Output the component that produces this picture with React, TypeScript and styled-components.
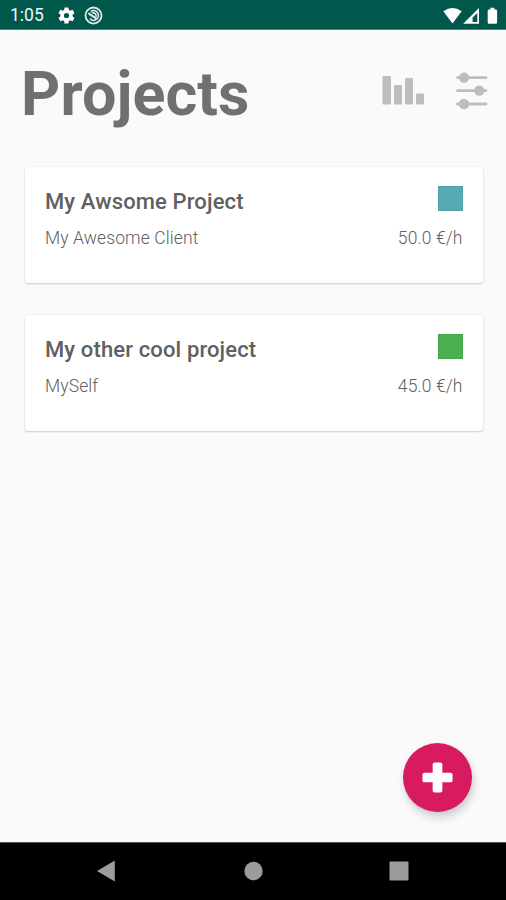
import React from "react";
import styled, { createGlobalStyle } from "styled-components";

const GlobalStyle = createGlobalStyle`
  * { box-sizing: border-box; }
  body { margin: 0; background: #fafafa; font-family: Roboto, "Liberation Sans", sans-serif; }
`;

const Screen = styled.div`
  width: 506px;
  height: 900px;
  display: flex;
  flex-direction: column;
  background: #fafafa;
  overflow: hidden;
`;

const StatusBar = styled.header`
  height: 30px;
  flex: none;
  display: flex;
  align-items: flex-start;
  justify-content: space-between;
  padding: 0 7px 0 10px;
  background: #00574b;
  border-bottom: 1px solid #4c8980;
  color: #fff;
`;

const StatusGroup = styled.div`
  display: flex;
  align-items: center;
  height: 31px;
`;

const Clock = styled.span`
  width: 48px;
  font-size: 17.5px;
  line-height: 31px;
  font-weight: 400;
  color: #f0f7f6;
`;

const StatusIcon = styled.svg`
  flex: none;
  margin-right: 9px;
`;

const Content = styled.main`
  flex: 1;
  display: flex;
  flex-direction: column;
  padding: 28px 23px 0 24px;
`;

const TitleRow = styled.div`
  display: flex;
  justify-content: space-between;
  height: 109px;
  margin-right: -6px;
`;

const Title = styled.h1`
  margin: 1px 0 0 -4px;
  font-size: 61px;
  line-height: 71px;
  font-weight: 700;
  letter-spacing: 0.1px;
  padding-left: 1px;
  color: #707070;
`;

const Actions = styled.div`
  display: flex;
  gap: 32px;
  padding-top: 13px;
  color: #bdbdbd;
`;

const IconButton = styled.button`
  padding: 0;
  border: 0;
  background: none;
  color: inherit;
  height: 40px;
  display: flex;
`;

const CardList = styled.div`
  display: flex;
  flex-direction: column;
  gap: 32px;
  padding-left: 1px;
`;

const Card = styled.article`
  height: 116px;
  padding: 19px 20.5px 0 20px;
  background: #fff;
  border-radius: 3px;
  box-shadow: 0 1px 2px rgba(0, 0, 0, 0.18), 0 0 2px rgba(0, 0, 0, 0.07);
`;

const CardRow = styled.div`
  display: flex;
  justify-content: space-between;
  align-items: flex-start;
`;

const ProjectName = styled.h2`
  margin: 0;
  font-size: 22px;
  line-height: 32px;
  font-weight: 500;
  letter-spacing: 0.13px;
  color: #606060;
`;

const Swatch = styled.span<{ $color: string }>`
  width: 25px;
  height: 25px;
  background: ${(p) => p.$color};
  box-shadow: inset 0 0 0 1px rgba(0, 0, 0, 0.06);
`;

const Detail = styled.span`
  font-size: 17.5px;
  line-height: 40px;
  font-weight: 300;
  letter-spacing: 0.1px;
  color: #606060;
`;

const AddButton = styled.button`
  width: 69px;
  height: 69px;
  margin: auto 11px 30px auto;
  padding: 0;
  border: 0;
  border-radius: 50%;
  display: flex;
  align-items: center;
  justify-content: center;
  background: #d81b60;
  box-shadow: 2px 6px 9px rgba(0, 0, 0, 0.16), 0 1px 5px rgba(0, 0, 0, 0.06);
`;

const NavBar = styled.nav`
  height: 58px;
  flex: none;
  display: flex;
  justify-content: space-between;
  align-items: center;
  padding: 0 97px 2px 96px;
  background: #000;
  border-top: 1px solid #555;
`;

const projects = [
  { name: "My Awsome Project", client: "My Awesome Client", rate: "50.0 €/h", color: "#55abb4" },
  { name: "My other cool project", client: "MySelf", rate: "45.0 €/h", color: "#4caf50" },
];

export default function App() {
  return (
    <>
      <GlobalStyle />
      <Screen>
        <StatusBar>
          <StatusGroup>
            <Clock>1:05</Clock>
            <StatusIcon width="17" height="17" viewBox="1.5 1.5 21 21" fill="#fff">
              <path d="M19.43 12.98c.04-.32.07-.64.07-.98s-.03-.66-.07-.98l2.11-1.65c.19-.15.24-.42.12-.64l-2-3.46c-.12-.22-.39-.3-.61-.22l-2.49 1c-.52-.4-1.08-.73-1.69-.98l-.38-2.65A.49.49 0 0 0 14 2h-4c-.25 0-.46.18-.49.42l-.38 2.65c-.61.25-1.17.59-1.69.98l-2.49-1c-.23-.09-.49 0-.61.22l-2 3.46c-.13.22-.07.49.12.64l2.11 1.65c-.04.32-.07.65-.07.98s.03.66.07.98l-2.11 1.65c-.19.15-.24.42-.12.64l2 3.46c.12.22.39.3.61.22l2.49-1c.52.4 1.08.73 1.69.98l.38 2.65c.03.24.24.42.49.42h4c.25 0 .46-.18.49-.42l.38-2.65c.61-.25 1.17-.59 1.69-.98l2.49 1c.23.09.49 0 .61-.22l2-3.46c.12-.22.07-.49-.12-.64l-2.11-1.65zM12 15.2a3.2 3.2 0 1 1 0-6.4 3.2 3.2 0 0 1 0 6.4z" />
            </StatusIcon>
            <StatusIcon width="19" height="19" viewBox="0 0 18 18" fill="none" stroke="#dcebe8">
              <circle cx="9" cy="9" r="7.6" strokeWidth="1.7" />
              <path d="M6.4 5.2A4.6 4.6 0 1 1 5.6 12" strokeWidth="1.6" />
              <path d="M4.6 6.4C5.2 9.4 8.4 8.2 11.8 12.2" strokeWidth="2" />
              <path d="M7.4 6.6c2.6-.6 4.4 1 4.2 3.6" strokeWidth="1.5" />
            </StatusIcon>
          </StatusGroup>
          <StatusGroup>
            <svg width="56" height="20" viewBox="443 5 56 20" fill="#fff">
              <path d="M443.3 10.3Q452.5 3.6 461.7 10.3L452.5 22.5Z" />
              <path fillRule="evenodd" d="M479 7V22.7H463.2ZM477.3 12L472.6 16.6V21H477.3Z" />
              <path d="M489 8.4h1.4V6.8h4v1.6h1.4q1.3 0 1.3 1.3v11.7q0 1.3-1.3 1.3h-6.8q-1.3 0-1.3-1.3V9.7q0-1.3 1.3-1.3Z" />
            </svg>
          </StatusGroup>
        </StatusBar>
        <Content>
          <TitleRow>
            <Title>Projects</Title>
            <Actions>
              <IconButton aria-label="Statistics">
                <svg width="42" height="40" viewBox="382 71 42 40" fill="currentColor">
                  <rect x="382.5" y="76" width="8.5" height="28.5" rx="1" />
                  <rect x="394" y="85" width="8" height="19.5" rx="1" />
                  <rect x="405" y="78" width="8" height="26.5" rx="1" />
                  <rect x="416" y="93.5" width="8" height="11" rx="1" />
                </svg>
              </IconButton>
              <IconButton aria-label="Settings">
                <svg width="33" height="40" viewBox="456 71 33 40" fill="currentColor" stroke="currentColor" strokeWidth="2.8" strokeLinecap="round">
                  <path d="M457.5 77.6H486M457.5 90.6H486M457.5 104H486" />
                  <g stroke="none">
                    <circle cx="464" cy="77.6" r="5.2" />
                    <circle cx="479.3" cy="90.6" r="5.2" />
                    <circle cx="464" cy="104" r="5.2" />
                  </g>
                </svg>
              </IconButton>
            </Actions>
          </TitleRow>
          <CardList>
            {projects.map((project) => (
              <Card key={project.name}>
                <CardRow>
                  <ProjectName>{project.name}</ProjectName>
                  <Swatch $color={project.color} />
                </CardRow>
                <CardRow>
                  <Detail>{project.client}</Detail>
                  <Detail>{project.rate}</Detail>
                </CardRow>
              </Card>
            ))}
          </CardList>
          <AddButton aria-label="Add project">
            <svg width="31" height="31" viewBox="0 0 32 32" fill="#fff">
              <rect x="11" y="0.5" width="10" height="31" rx="2" />
              <rect x="0.5" y="11" width="31" height="10" rx="2" />
            </svg>
          </AddButton>
        </Content>
        <NavBar>
          <svg width="20" height="22" viewBox="0 0 20 22" fill="#9c9c9c">
            <path d="M1 11L18.8 .6V21.4Z" />
          </svg>
          <svg width="20" height="20" viewBox="0 0 20 20" fill="#9c9c9c">
            <circle cx="10.5" cy="10" r="9.2" />
          </svg>
          <svg width="20" height="20" viewBox="0 0 20 20" fill="#9c9c9c">
            <rect x=".5" y=".5" width="19" height="19" rx="1" />
          </svg>
        </NavBar>
      </Screen>
    </>
  );
}
